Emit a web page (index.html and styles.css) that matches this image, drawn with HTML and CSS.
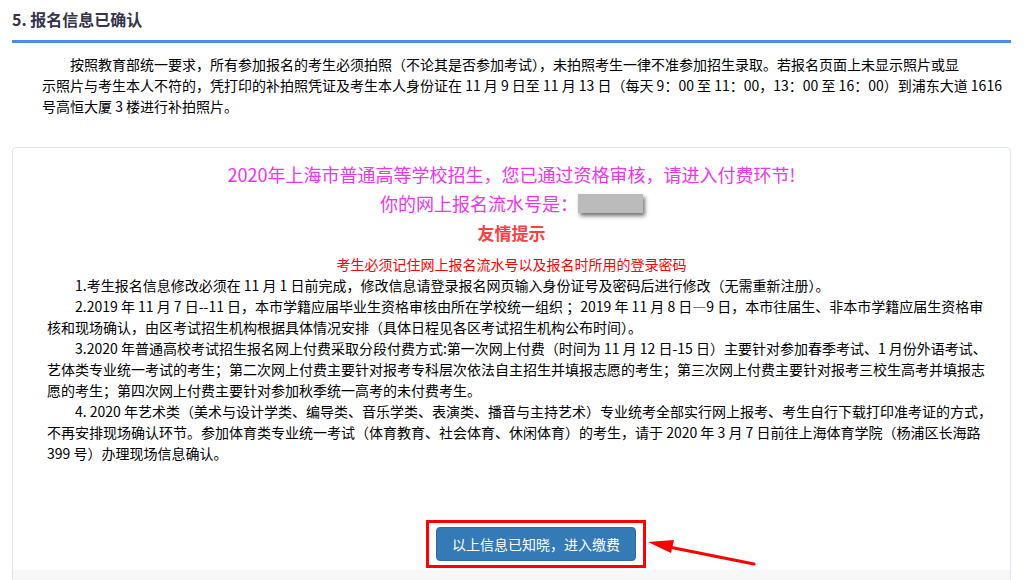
FILE: index.html
```html
<!DOCTYPE html>
<html lang="zh-CN">
<head>
<meta charset="utf-8">
<title>报名信息已确认</title>
<link rel="stylesheet" href="styles.css">
</head>
<body>
<div class="page">
  <h2 class="section-title">5. 报名信息已确认</h2>
  <p class="notice">按照教育部统一要求，所有参加报名的考生必须拍照（不论其是否参加考试），未拍照考生一律不准参加招生录取。若报名页面上未显示照片或显<br>示照片与考生本人不符的，凭打印的补拍照凭证及考生本人身份证在 11 月 9 日至 11 月 13 日（每天 9：00 至 11：00，13：00 至 16：00）到浦东大道 1616<br>号高恒大厦 3 楼进行补拍照片。</p>

  <div class="card">
    <div class="card-body">
      <div class="pink-line">2020年上海市普通高等学校招生，您已通过资格审核，请进入付费环节!</div>
      <div class="pink-line">你的网上报名流水号是：<span class="serial"></span></div>
      <div class="tip-title">友情提示</div>
      <div class="tip-sub">考生必须记住网上报名流水号以及报名时所用的登录密码</div>
      <div class="tips">
        <p>1.考生报名信息修改必须在 11 月 1 日前完成，修改信息请登录报名网页输入身份证号及密码后进行修改（无需重新注册）。</p>
        <p>2.2019 年 11 月 7 日--11 日，本市学籍应届毕业生资格审核由所在学校统一组织 ；2019 年 11 月 8 日—9 日，本市往届生、非本市学籍应届生资格审<br>核和现场确认，由区考试招生机构根据具体情况安排（具体日程见各区考试招生机构公布时间）。</p>
        <p>3.2020 年普通高校考试招生报名网上付费采取分段付费方式:第一次网上付费（时间为 11 月 12 日-15 日）主要针对参加春季考试、1 月份外语考试、<br>艺体类专业统一考试的考生；第二次网上付费主要针对报考专科层次依法自主招生并填报志愿的考生；第三次网上付费主要针对报考三校生高考并填报志<br>愿的考生；第四次网上付费主要针对参加秋季统一高考的未付费考生。</p>
        <p>4. 2020 年艺术类（美术与设计学类、编导类、音乐学类、表演类、播音与主持艺术）专业统考全部实行网上报考、考生自行下载打印准考证的方式，<br>不再安排现场确认环节。参加体育类专业统一考试（体育教育、社会体育、休闲体育）的考生，请于 2020 年 3 月 7 日前往上海体育学院（杨浦区长海路<br>399 号）办理现场信息确认。</p>
      </div>
      <div class="action-row">
        <div class="action-wrap">
          <button class="btn-pay" type="button">以上信息已知晓，进入缴费</button>
          <div class="mark-box"></div>
          <svg class="mark-arrow" width="115" height="40" viewBox="0 0 115 40">
            <line x1="24" y1="15" x2="109" y2="32" stroke="#ff0000" stroke-width="3" stroke-linecap="round"/>
            <polygon points="3,10 29,8 26,21" fill="#ff0000"/>
          </svg>
        </div>
      </div>
    </div>
    <div class="card-footer"></div>
  </div>
</div>
</body>
</html>
```

FILE: styles.css
```css
html, body {
  margin: 0;
  padding: 0;
  background: #ffffff;
}

body {
  font-family: "SimSun", "Noto Sans CJK SC", "DejaVu Sans", sans-serif;
  font-size: 14px;
  color: #000;
}

.page {
  margin: 0 14px 0 12px;
}

.section-title {
  margin: 0;
  font-size: 16px;
  font-weight: 700;
  line-height: 38px;
  padding-bottom: 2px;
  color: #34344a;
  border-bottom: 3px solid #4a8fdf;
}

.notice {
  margin: 11px 0 0 0;
  padding: 0 10px 0 30px;
  line-height: 21px;
  text-indent: 28px;
  white-space: nowrap;
}

.card {
  margin-top: 30px;
  border: 1px solid #dbe5f0;
  border-radius: 4px;
  overflow: hidden;
}

.card-body {
  padding-top: 12px;
}

.pink-line {
  text-align: center;
  font-size: 18px;
  line-height: 29px;
  color: #ec36ec;
}

.serial {
  display: inline-block;
  width: 65px;
  height: 19px;
  background: #bbbbbb;
  vertical-align: -2px;
  box-shadow: 2px 3px 4px rgba(0, 0, 0, 0.55);
}

.tip-title {
  text-align: center;
  font-size: 17px;
  font-weight: 700;
  line-height: 29px;
  color: #ff4040;
}

.tip-sub {
  margin-top: 7px;
  text-align: center;
  line-height: 21px;
  color: #ff0000;
}

.tips {
  padding: 0 10px 0 34px;
}

.tips p {
  margin: 0;
  line-height: 21px;
  text-indent: 28px;
  white-space: nowrap;
}

.action-row {
  margin-top: 63px;
  padding-left: 49px;
  display: flex;
  justify-content: center;
}

.action-wrap {
  position: relative;
}

.btn-pay {
  display: block;
  width: 200px;
  height: 34px;
  border: 1px solid #2e6da4;
  border-radius: 4px;
  background: #337ab7;
  color: #ffffff;
  font-family: inherit;
  font-size: 14px;
  padding: 0;
}

.mark-box {
  position: absolute;
  left: -10px;
  top: -7px;
  width: 220px;
  height: 48px;
  box-sizing: border-box;
  border: 3px solid #ff0000;
}

.mark-arrow {
  position: absolute;
  left: 209px;
  top: 5px;
}

.card-footer {
  margin-top: 9px;
  height: 50px;
  background: #f7f7f7;
}
```
